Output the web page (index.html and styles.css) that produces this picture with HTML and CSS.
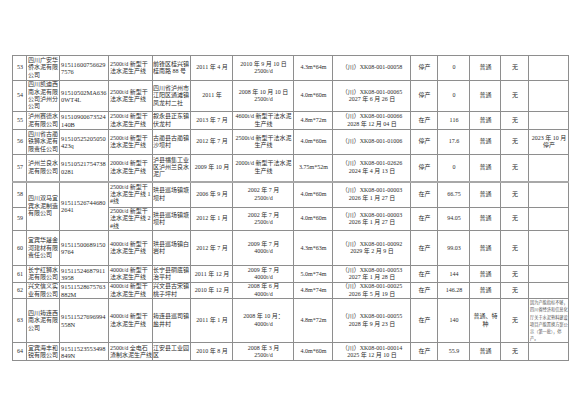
FILE: index.html
```html
<!DOCTYPE html>
<html lang="zh">
<head>
<meta charset="utf-8">
<title>水泥企业名单</title>
<link rel="stylesheet" href="styles.css">
</head>
<body>
<div class="page">
<table class="grid">
<colgroup>
<col class="c-num"><col class="c-co"><col class="c-code"><col class="c-proc"><col class="c-loc"><col class="c-date"><col class="c-cap"><col class="c-size"><col class="c-lic"><col class="c-st"><col class="c-out"><col class="c-type"><col class="c-none"><col class="c-rem">
</colgroup>
<tbody>
<tr class="h25">
<td>53</td><td class="l">四川广安华侨水泥有限公司</td><td class="l code">915116007566297576</td><td class="l">2500t/d 新型干法水泥生产线</td><td class="l loc">前锋区桂兴镇桂南路 88 号</td><td>2011 年 4 月</td><td>2010 年 9 月 10 日<br>2500t/d</td><td>4.3m*64m</td><td>（川）XK08-001-00058</td><td>停产</td><td>0</td><td>普通</td><td>无</td><td></td>
</tr>
<tr class="h31">
<td>54</td><td class="l">四川凯迪西南水泥有限公司泸州分公司</td><td class="l code">91510502MA636<br>0WT4L</td><td class="l">2500t/d 新型干法水泥生产线</td><td class="l loc">四川省泸州市江阳区通滩镇凤龙村二社</td><td>2011 年</td><td>2008 年 10 月 10 日<br>2500t/d</td><td>4.0m*60m</td><td>（川）XK08-001-00065<br>2027 年 6 月 26 日</td><td>停产</td><td>0</td><td>普通</td><td>无</td><td></td>
</tr>
<tr class="h18">
<td>55</td><td class="l">泸州赛德水泥有限公司</td><td class="l code">91510900673524140B</td><td class="l">2500t/d 新型干法水泥生产线</td><td class="l loc">叙永县正东镇伏龙村</td><td>2013 年 7 月</td><td>4600t/d 新型干法水泥生产线</td><td>4.8m*72m</td><td>（川）XK08-001-00066<br>2028 年 12 月 04 日</td><td>在产</td><td>116</td><td>普通</td><td>无</td><td></td>
</tr>
<tr class="h25">
<td>56</td><td class="l">四川省古蔺铁狮水泥有限责任公司</td><td class="l code">91510525205050423q</td><td class="l">2500t/d 新型干法水泥生产线</td><td class="l loc">古蔺县古蔺镇沙坝村</td><td>2012 年 7 月</td><td>2500t/d 新型干法水泥生产线</td><td>4.0m*60m</td><td>（川）XK08-001-01006</td><td>停产</td><td>17.6</td><td>普通</td><td>无</td><td>2023 年 10 月<br>停产</td>
</tr>
<tr class="h27">
<td>57</td><td class="l">泸州兰良水泥有限公司</td><td class="l code">915105217547380281</td><td class="l">2000t/d 新型干法水泥生产线</td><td class="l loc">泸县福集工业区泸州兰良水泥厂</td><td>2009 年 10 月</td><td>2000t/d 新型干法水泥生产线</td><td>3.75m*52m</td><td>（川）XK08-001-02626<br>2024 年 4 月 13 日</td><td>停产</td><td>0</td><td>普通</td><td>无</td><td></td>
</tr>
<tr class="h26 thick">
<td>58</td><td class="l" rowspan="2">四川双马宜宾水泥制造有限公司</td><td class="l code" rowspan="2">915115267446802641</td><td class="l">2500t/d 新型干法水泥生产线 1 #线</td><td class="l loc">珙县巡场镇塘坝村</td><td>2006 年 9 月</td><td>2002 年 7 月<br>2500t/d</td><td>4.0m*60m</td><td>（川）XK08-001-00003<br>2026 年 1 月 27 日</td><td>在产</td><td>66.75</td><td>普通</td><td>无</td><td></td>
</tr>
<tr class="h23">
<td>59</td><td class="l">2500t/d 新型干法水泥生产线 2 #线</td><td class="l loc">珙县巡场镇塘坝村</td><td>2012 年 1 月</td><td>2002 年 7 月<br>2500t/d</td><td>4.0m*60m</td><td>（川）XK08-001-00003<br>2026 年 1 月 27 日</td><td>在产</td><td>94.05</td><td>普通</td><td>无</td><td></td>
</tr>
<tr class="h35">
<td>60</td><td class="l">宜宾华晟金河建材有限责任公司</td><td class="l code">915115006891509764</td><td class="l">4000t/d 新型干法水泥生产线</td><td class="l loc">珙县巡场镇白岩村</td><td>2012 年 7 月</td><td>2009 年 7 月<br>4000t/d</td><td>4.3m*63m</td><td>（川）XK08-001-00092<br>2029 年 2 月 9 日</td><td>在产</td><td>99.03</td><td>普通</td><td>无</td><td></td>
</tr>
<tr class="h17">
<td>61</td><td class="l">长宁红狮水泥有限公司</td><td class="l code">915115246879113958</td><td class="l">4000t/d 新型干法水泥生产线</td><td class="l loc">长宁县硐底镇治平村</td><td>2011 年 12 月</td><td>2009 年 7 月<br>4000t/d</td><td>5.0m*74m</td><td>（川）XK08-001-00053<br>2027 年 1 月 28 日</td><td>在产</td><td>144</td><td>普通</td><td>无</td><td></td>
</tr>
<tr class="h16">
<td>62</td><td class="l">兴文信义实业有限公司</td><td class="l code">91511528675763882M</td><td class="l">4000t/d 新型干法水泥生产线</td><td class="l loc">兴文县古宋镇桃子坪村</td><td>2010 年 12 月</td><td>2008 年 6 月<br>4000t/d</td><td>4.8m*74m</td><td>（川）XK08-001-00025<br>2026 年 5 月 19 日</td><td>在产</td><td>146.28</td><td>普通</td><td>无</td><td></td>
</tr>
<tr class="h42">
<td>63</td><td class="l">四川筠连西南水泥有限公司</td><td class="l code">91511527696994558N</td><td class="l">4000t/d 新型干法水泥生产线</td><td class="l loc">筠连县巡司镇盐井村</td><td>2011 年 1 月</td><td>2008 年 10 月：<br>4000t/d</td><td>4.8m*72m</td><td>（川）XK08-001-00055<br>2028 年 9 月 23 日</td><td>在产</td><td>140</td><td>普通、特种</td><td>无</td><td class="l note">因为产能指标不够，四川省经济和信息化厅关于水泥熟料建设项目产能置换方案公示（第一批），停产。</td>
</tr>
<tr class="h18">
<td>64</td><td class="l">宜宾海丰和锐有限公司</td><td class="l code">91511523553498849N</td><td class="l"><div class="clipbox">2500t/d 全电石渣制水泥生产线</div></td><td class="l loc">江安县工业园区</td><td>2010 年 8 月</td><td>2008 年 3 月<br>2500t/d</td><td>4.0m*60m</td><td>（川）XK08-001-00014<br>2025 年 12 月 10 日</td><td>在产</td><td>55.9</td><td>普通</td><td>无</td><td></td>
</tr>
</tbody>
</table>
</div>
</body>
</html>
```
FILE: styles.css
```css
html, body {
  margin: 0;
  background: #ffffff;
}

body {
  font-family: "Liberation Serif", "Noto Sans CJK SC", serif;
  color: #2b2b2b;
}

.page {
  padding: 55px 0 0 12px;
}

.grid {
  border-collapse: collapse;
  table-layout: fixed;
  width: 556px;
  font-size: 6px;
  line-height: 7.4px;
}

.grid td {
  border: 1px solid #8e8e8e;
  padding: 0 0 0 1px;
  vertical-align: middle;
  text-align: center;
  word-break: break-all;
  overflow: hidden;
}

.grid td.l {
  text-align: left;
}

.grid td.code {
  font-size: 6.4px;
}

.grid td.loc {
  padding: 0;
}

.grid td.note {
  font-size: 4.2px;
  line-height: 7.2px;
  color: #555;
}

.clipbox {
  max-height: 15px;
  overflow: hidden;
}

.thick td {
  border-top: 2px solid #a8a8a8;
}

.c-num { width: 14px; }
.c-co { width: 33px; }
.c-code { width: 49px; }
.c-proc { width: 44px; }
.c-loc { width: 38px; }
.c-date { width: 42px; }
.c-cap { width: 61px; }
.c-size { width: 39px; }
.c-lic { width: 78px; }
.c-st { width: 27px; }
.c-out { width: 32px; }
.c-type { width: 31px; }
.c-none { width: 28px; }
.c-rem { width: 40px; }

.h16 { height: 16px; }
.h17 { height: 17px; }
.h18 { height: 18px; }
.h23 { height: 23px; }
.h25 { height: 25px; }
.h26 { height: 26px; }
.h27 { height: 27px; }
.h31 { height: 31px; }
.h35 { height: 35px; }
.h42 { height: 42px; }
```
